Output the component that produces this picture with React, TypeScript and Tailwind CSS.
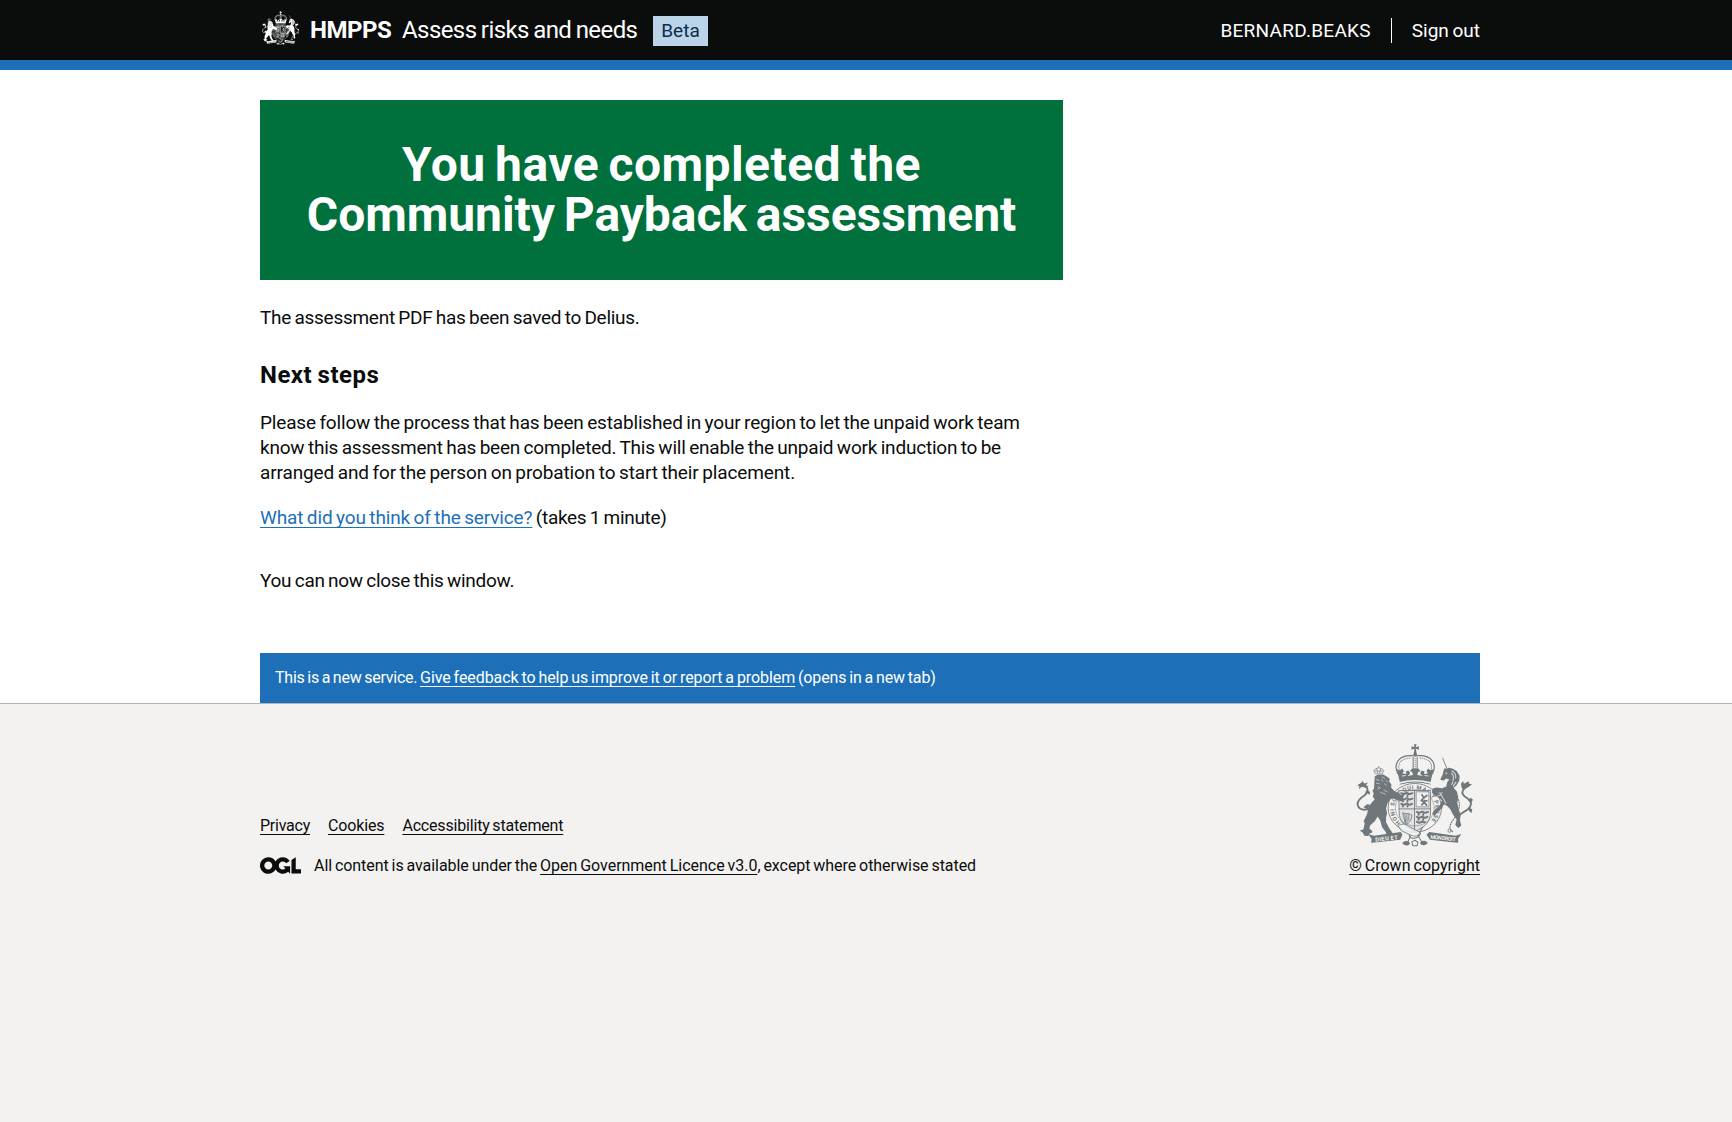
import React from 'react';

function RoyalArms({ className }: { className: string }) {
  return (
    <svg
      className={className}
      viewBox="50 25 350 308"
      preserveAspectRatio="none"
      fill="none"
      stroke="currentColor"
      strokeLinecap="round"
      strokeLinejoin="round"
      aria-hidden="true"
    >
      {/* crown */}
      <path fill="currentColor" stroke="none" d="M223 26h8l-2 9 9-3v10l-9-3 2 13h-8l2-13-9 3V32l9 3z" />
      <circle cx="227" cy="57" r="6" fill="currentColor" stroke="none" />
      <path strokeWidth="3.5" d="M175 114C160 82 180 57 219 60M279 114C294 82 274 57 235 60" />
      <path strokeWidth="3" strokeDasharray="1 5" d="M181 106c-10-24 6-39 35-39M273 106c10-24-6-39-35-39" />
      <path strokeWidth="3" d="M221 64v38m12-38v38" />
      <path strokeWidth="3" strokeDasharray="1 5" d="M227 68v32" />
      <path fill="currentColor" stroke="none" d="M172 100l9 4 7-6 5 8-4 7 12 2-2-8 8-3 5 8-3 5 12 1-3-9-7-3 7-8h18l7 8-7 3-3 9 12-1-3-5 5-8 8 3-2 8 12-2-4-7 5-8 7 6 9-4-9 39c-28-8-66-8-92 0z" />
      <path className="stroke-(--paper)" strokeOpacity=".8" strokeWidth="3" d="M188 121l10-2m9 0l10-2m20 0l10 2m9 0l10 2" />
      <path strokeWidth="3" d="M182 145c29-8 61-8 90 0" />

      {/* garter */}
      <ellipse cx="226" cy="216" rx="80" ry="73" strokeWidth="2.5" />
      <ellipse cx="226" cy="216" rx="58" ry="54" strokeWidth="1.5" />
      <defs>
        <path id="garter-line" d="M184 261A62 58 0 1 1 268 261" />
      </defs>
      <text fill="currentColor" stroke="none" className="font-['Roboto'] text-[17px] font-bold">
        <textPath href="#garter-line" textLength="275">HONI SOIT QUI MAL Y PENSE</textPath>
      </text>

      {/* shield */}
      <path strokeWidth="2.5" fill="currentColor" fillOpacity=".12" d="M179 164h94v64c0 30-16 45-46 58-30-13-48-28-48-58z" />
      <path strokeWidth="2.5" d="M225 164v120M179 219h94" />
      <path strokeWidth="5.5" d="M185 172l9 3 8-4 8 4 9-3M185 188l9 3 8-4 8 4 9-3M185 204l9 3 8-4 8 4 8-3M190 178v3m14-3v3m-14 13v3m14-3v3m-14 13v2m14-2v2" />
      <rect x="231" y="168" width="37" height="45" strokeWidth="2" className="fill-(--paper)" />
      <path strokeWidth="5" d="M247 177l6 9-8 8 10 4-8 9M253 186l9-7M255 194l7 1M255 200l6 8" />
      <path strokeWidth="2.5" d="M190 230c5 8 15-3 26 8M190 231l8 35c12-4 18-13 19-28M196 234l3 28M202 235l1 24M208 236l0 18" />
      <path strokeWidth="5.5" d="M232 228l8 3 8-4 8 4 10-3M232 243l8 3 8-4 8 4 8-3M232 258l8 3 7-4 9 2M237 234v3m14-3v3m-14 12v3m14-3v3" />

      {/* lion */}
      <path
        fill="currentColor"
        stroke="none"
        d="M106 122l8-5 18-1 11 7 8 6-2 8 7 9-1 9 8 9 14 9 12 7 3 5-3 3 4 5-6 3-9-1-18-8-8 4-8 12-4 15 3 14-3 13 0 14 10 19 10 14-4 3-15 1-2-8-11-14-5-19-8-13-9 14-14 13-2 9 9 8-2 5-6 1-4 8-12-1-5-9-9-6 11-3 4-18-3-8 10-20 4-19 10-16 9-9-6-9 3-9-4-9 5-5z"
      />
      <path className="stroke-(--paper)" strokeOpacity=".65" strokeWidth="2.5" d="M110 130l9 4m-8 8l9 2m8-20l8 4m-20 25l7 4m12-13l6 4M124 170l14 5M126 132l5 4m9-2l3 4M120 155l-5 6M134 163l10 5" />
      <path strokeWidth="2" d="M107 113l-4-9 7-5 8-3 9 3 6 5-4 9zM118 96v-4M107 106h21M112 99l3 12M124 99l-3 12" />
      <path strokeWidth="5.5" d="M92 216c-13 8-30 8-36-5-5-13 7-24 18-31 11-8 15-20 5-28-7-4-12-5-19-4" />
      <path fill="currentColor" stroke="none" d="M53 149l13-8 3-5 6 7 11-3-6 8 8 5-8 3-13-3-8 7 1-10zM80 163l12 5-1 9-8-5-7 8zM72 214l11-9 10 2-8 12z" />

      {/* unicorn */}
      <path strokeWidth="2.5" d="M309 67l13 31" />
      <path
        fill="currentColor"
        stroke="none"
        d="M312 104l3-7 5 3 6-4 12 2 13 8 9 14-1 14-8 14-9 8 10 12 4 16-3 17 4 18 6 18-2 17 4 15-9 7-9-9 4-16-10-14-9-17-8-9-11-6-4 9-14 14-11 12-6-7 8-12 14-11 7-17-9-7-13-7-8-9 2-12 12-3 16 2 13-5 3-13 6-8-9-3-9 7-9-4 7-14z"
      />
      <path className="stroke-(--paper)" strokeOpacity=".8" strokeWidth="3" d="M337 105c8 5 13 12 11 22m-12-15c6 7 7 14 4 22M349 139l-8 12M318 112l4 1M303 174l16 28M340 138l-4 8" />
      <path className="stroke-(--paper)" strokeOpacity=".8" strokeWidth="2.5" d="M293 181l12-4m-7-5l10-1" />
      <path strokeWidth="5.5" d="M353 245c14-19 21-14 32-25 12-11 12-23 0-31-11-8-21-14-15-26 3-7 10-9 16-14" />
      <path fill="currentColor" stroke="none" d="M366 156l-2-12 6-8 3 8 9-5 7-2-2 6 10 2-11 9-9 1-4 9zM385 194l8-8 7 6-5 8zM389 215l9 6-3 11-9-10z" />
      <path strokeWidth="3.5" strokeDasharray="3 5" d="M352 184c11 16 8 33 1 48-6 15-22 28-22 42 0 8 5 11 8 13" />
      <circle cx="330" cy="284" r="5" strokeWidth="2.5" />

      {/* motto ribbon */}
      <path fill="currentColor" stroke="none" d="M86 294l18 5 80-11 5 8-7 15-68 8-19 1 2-11zM365 294l-18 5-78-11-8 8 10 15 67 8 18 1-1-11z" />
      <text x="108" y="317" transform="rotate(-6 108 317)" textLength="68" className="fill-(--paper) stroke-none font-['Roboto'] text-[17px] font-bold">DIEU ET</text>
      <text x="272" y="308" transform="rotate(6 272 308)" textLength="76" className="fill-(--paper) stroke-none font-['Roboto'] text-[16px] font-bold">MON DROIT</text>
      <path className="fill-(--paper)" fillOpacity=".8" strokeWidth="2.5" d="M177 270c9-8 20-7 30 1l34 18c-4 12-14 14-26 9l-28-13z" />
      <path strokeWidth="3" d="M213 300l-8 18m30-20l12 20M241 289l8-15M209 298c4 12 26 14 34-6" />
      <path fill="currentColor" strokeWidth="3" d="M190 321c6-7 18-6 20 1-3 8-16 6-20-1zM243 322c4-8 15-8 20-1-6 7-16 7-20 1z" />
      <path strokeWidth="3" d="M217 318l8-5 10 5-2 11h-13z" />
    </svg>
  );
}

function OglLogo() {
  return (
    <svg className="mr-[13px] mt-[-2px] h-[17px] w-[41px] shrink-0" viewBox="0 0 483.2 195.7" fill="currentColor" aria-hidden="true">
      <path d="M421.5 142.8V.1l-50.7 32.3v161.1h112.4v-50.7zm-122.3-9.6A47.12 47.12 0 0 1 221 97.8c0-26 21.1-47.1 47.1-47.1 16.7 0 31.4 8.7 39.7 21.8l42.7-27.2A97.63 97.63 0 0 0 268.1 0c-36.5 0-68.3 20.1-85.1 49.7A98 98 0 0 0 97.8 0C43.9 0 0 43.9 0 97.8s43.9 97.8 97.8 97.8c36.5 0 68.3-20.1 85.1-49.7a97.76 97.76 0 0 0 149.6 25.4l19.4 22.2h3v-87.8h-80l24.3 27.5zM97.8 145c-26 0-47.1-21.1-47.1-47.1s21.1-47.1 47.1-47.1 47.1 21.1 47.1 47.1S123.8 145 97.8 145" />
    </svg>
  );
}

function Link({ className = '', children }: { className?: string; children: React.ReactNode }) {
  return (
    <a
      href="#"
      className={`underline decoration-1 underline-offset-[3px] [text-decoration-skip-ink:none] ${className}`}
    >
      {children}
    </a>
  );
}

function Header() {
  return (
    <header className="h-[70px] border-b-[10px] border-[#1d70b8] bg-[#0b0c0c] text-white">
      <div className="ml-[260px] flex h-[60px] w-[1220px] items-center justify-between">
        <div className="flex items-center">
          <RoyalArms className="ml-0.5 mr-[11px] mt-[-4px] h-[34px] w-[37px] [--paper:#0b0c0c]" />
          <span className="w-[92px] text-[24px] font-bold leading-[30px] tracking-[-0.475px]">HMPPS</span>
          <span className="w-[251px] text-[24px] leading-[30px] tracking-[-0.58px]">Assess risks and needs</span>
          <strong className="mt-0.5 flex h-[30px] w-[55px] items-center justify-center bg-[#bbd4ea] text-[19px] font-normal text-[#0c2d4a]">
            Beta
          </strong>
        </div>
        <div className="flex items-center text-[19px] leading-[25px]">
          <span className="border-r border-white pr-5 tracking-[0.27px]">BERNARD.BEAKS</span>
          <span className="pl-5 tracking-[-0.02px]">Sign out</span>
        </div>
      </div>
    </header>
  );
}

export default function App() {
  return (
    <div className="min-h-[1122px] bg-[#f3f2f1] font-['Roboto',sans-serif] text-[#0b0c0c] [word-spacing:-1px]">
      <Header />
      <div className="bg-white">
        <main className="ml-[260px] flex h-[633px] w-[1220px] flex-col pt-[30px] text-[19px] leading-[25px]">
          <div className="h-[180px] w-[803px] bg-[#00703c] pt-10 text-center text-white">
            <h1 className="text-[48px] font-bold leading-[50px] [word-spacing:-3px]">
              <span className="tracking-[0.46px]">You have completed the</span>
              <br />
              <span className="tracking-[-0.05px]">Community Payback assessment</span>
            </h1>
          </div>
          <p className="mt-[25px] tracking-[-0.275px]">The assessment PDF has been saved to Delius.</p>
          <h2 className="mt-[30px] text-[24px] font-bold leading-[30px] tracking-[0.48px]">Next steps</h2>
          <p className="mt-5">
            <span className="block tracking-[-0.17px]">
              Please follow the process that has been established in your region to let the unpaid work team
            </span>
            <span className="block tracking-[-0.21px]">
              know this assessment has been completed. This will enable the unpaid work induction to be
            </span>
            <span className="block tracking-[-0.125px]">
              arranged and for the person on probation to start their placement.
            </span>
          </p>
          <p className="mt-5">
            <Link className="tracking-[-0.145px] text-[#1d70b8]">What did you think of the service?</Link>
            <span className="tracking-[-0.3px]"> (takes 1 minute)</span>
          </p>
          <p className="mt-[38px] tracking-[-0.28px]">You can now close this window.</p>
          <div className="mt-auto flex h-[50px] items-center bg-[#1d70b8] px-[15px] text-[16px] leading-5 text-white">
            <p>
              <span className="tracking-[-0.24px]">This is a new service. </span>
              <Link className="tracking-[-0.07px]">Give feedback to help us improve it or report a problem</Link>
              <span className="tracking-[-0.13px]"> (opens in a new tab)</span>
            </p>
          </div>
        </main>
      </div>
      <footer className="border-t border-[#b1b4b6]">
        <div className="ml-[260px] flex w-[1220px] items-end justify-between pt-10 text-[16px] leading-5">
          <div>
            <ul className="mb-5 flex gap-[18px]">
              <li><Link className="tracking-[-0.24px]">Privacy</Link></li>
              <li><Link className="tracking-[-0.15px]">Cookies</Link></li>
              <li><Link className="tracking-[-0.18px]">Accessibility statement</Link></li>
            </ul>
            <div className="flex items-center">
              <OglLogo />
              <p>
                <span className="tracking-[-0.06px]">All content is available under the </span>
                <Link className="tracking-[-0.03px]">Open Government Licence v3.0</Link>
                <span className="tracking-[-0.05px]">, except where otherwise stated</span>
              </p>
            </div>
          </div>
          <div className="flex flex-col items-end">
            <RoyalArms className="mb-[9px] mr-[7px] h-[103px] w-[117px] text-[#6f777b] [--paper:#f3f2f1]" />
            <Link className="tracking-[0.02px]">© Crown copyright</Link>
          </div>
        </div>
      </footer>
    </div>
  );
}
